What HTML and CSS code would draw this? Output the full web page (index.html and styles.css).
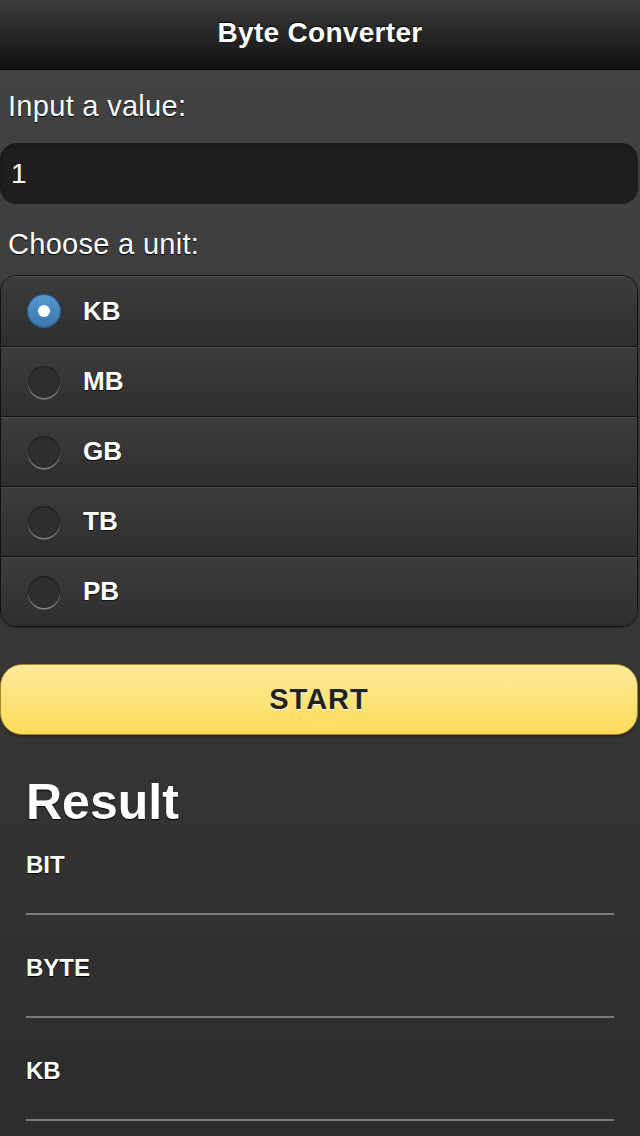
FILE: index.html
```html
<!DOCTYPE html>
<html lang="en">
<head>
<meta charset="utf-8">
<title>Byte Converter</title>
<link rel="stylesheet" href="styles.css">
</head>
<body>
<header class="bar"><h1 class="bar-title">Byte Converter</h1></header>
<main class="content">
  <label class="field-label" for="value">Input a value:</label>
  <input class="text-input" id="value" type="text" value="1">
  <div class="field-label">Choose a unit:</div>
  <div class="radio-group">
    <div class="radio-item"><span class="radio on"></span><span class="radio-text">KB</span></div>
    <div class="radio-item"><span class="radio"></span><span class="radio-text">MB</span></div>
    <div class="radio-item"><span class="radio"></span><span class="radio-text">GB</span></div>
    <div class="radio-item"><span class="radio"></span><span class="radio-text">TB</span></div>
    <div class="radio-item"><span class="radio"></span><span class="radio-text">PB</span></div>
  </div>
  <button class="btn-start" type="button">START</button>
  <section class="result">
    <h2 class="result-title">Result</h2>
    <div class="result-row"><div class="result-label">BIT</div></div>
    <div class="result-row"><div class="result-label">BYTE</div></div>
    <div class="result-row"><div class="result-label">KB</div></div>
  </section>
</main>
</body>
</html>
```

FILE: styles.css
```css
html {
  background: #2c2c2c;
}
body {
  margin: 0;
  min-height: 1136px;
  overflow: hidden;
  font-family: "Liberation Sans", Arial, sans-serif;
  color: #fff;
  background: linear-gradient(#444444 0, #2c2c2c 1136px);
}
.bar {
  height: 65px;
  padding-bottom: 4px;
  border-bottom: 1px solid #000;
  background: linear-gradient(#3c3c3c, #111111);
  display: flex;
  align-items: center;
  justify-content: center;
}
.bar-title {
  margin: 0;
  font-size: 28px;
  letter-spacing: 0.3px;
  font-weight: bold;
  text-shadow: 0 -1px 1px #000;
}
.content {
  padding-top: 19px;
}
.field-label {
  display: block;
  margin: 0 8px;
  font-size: 29px;
  letter-spacing: 0.3px;
  line-height: 34px;
  text-shadow: 0 1px 1px #000;
}
.text-input {
  display: block;
  box-sizing: border-box;
  width: calc(100% - 2px);
  height: 61px;
  margin: 20px 0 23px 0;
  padding: 0 10px;
  border: 1px solid #1b1b1b;
  border-radius: 16px;
  background: #1f1f1f;
  color: #fff;
  font-family: "Liberation Sans", Arial, sans-serif;
  font-size: 28px;
  box-shadow: inset 0 1px 4px rgba(0, 0, 0, 0.25);
  outline: none;
}
.radio-group {
  margin: 14px 2px 0 0;
  border: 1px solid #111;
  border-radius: 16px;
  overflow: hidden;
  box-shadow: 0 1px 2px rgba(0, 0, 0, 0.3);
}
.radio-item {
  height: 70px;
  box-sizing: border-box;
  display: flex;
  align-items: center;
  padding-left: 27px;
  background: linear-gradient(#3c3c3c, #2e2e2e);
  border-top: 1px solid #111;
  box-shadow: inset 0 1px 0 rgba(255, 255, 255, 0.09);
}
.radio-item:first-child {
  border-top: none;
}
.radio {
  width: 32px;
  height: 32px;
  border-radius: 50%;
  background: #2e2e2e;
  box-shadow: 0 1.5px 0 rgba(255, 255, 255, 0.4), inset 0 1px 2px rgba(0, 0, 0, 0.45);
  display: flex;
  align-items: center;
  justify-content: center;
}
.radio.on {
  background: linear-gradient(#5797cf, #3c77b0);
  box-shadow: 0 0 0 1px #2c5d8f;
}
.radio.on::after {
  content: "";
  width: 12px;
  height: 12px;
  border-radius: 50%;
  background: #fff;
}
.radio-text {
  margin-left: 23px;
  font-size: 26px;
  font-weight: bold;
  text-shadow: 0 1px 1px #111;
}
.btn-start {
  display: block;
  box-sizing: border-box;
  width: calc(100% - 2px);
  height: 71px;
  margin: 37px 0 0 0;
  border: 1px solid #a8872a;
  border-radius: 22px;
  background: linear-gradient(#fde99a, #fcdc5a);
  color: #222;
  font-family: "Liberation Sans", Arial, sans-serif;
  font-size: 29px;
  letter-spacing: 1px;
  font-weight: bold;
  text-shadow: 0 1px 0 #fff;
  box-shadow: 0 1px 3px rgba(0, 0, 0, 0.5);
}
.result {
  margin-top: 37px;
  padding: 0 26px;
}
.result-title {
  margin: 0;
  font-size: 50px;
  line-height: 60px;
  font-weight: bold;
  text-shadow: 0 1px 1px #000;
}
.result-row {
  padding: 39px 0 34px;
  border-bottom: 2px solid #7a7a7a;
}
.result-title + .result-row {
  padding-top: 19px;
}
.result-label {
  font-size: 24px;
  line-height: 28px;
  font-weight: bold;
  text-shadow: 0 1px 1px #000;
}
```
